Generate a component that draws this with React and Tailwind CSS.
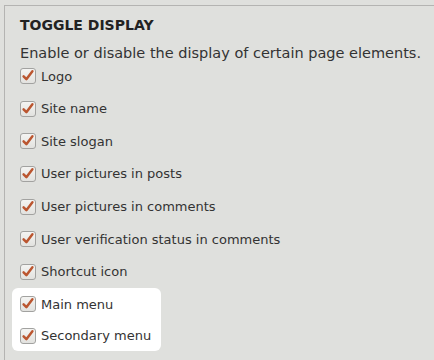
import React from "react";

const items = [
    "Logo",
    "Site name",
    "Site slogan",
    "User pictures in posts",
    "User pictures in comments",
    "User verification status in comments",
    "Shortcut icon",
];

const highlighted = ["Main menu", "Secondary menu"];

function CheckBox() {
    return (
        <span className="flex h-[16px] w-[16px] shrink-0 items-center justify-center rounded-[3px] border border-[#a2a2a0] bg-gradient-to-b from-[#f4f4f2] to-[#e2e2df]">
            <svg width="14" height="14" viewBox="0 0 13 13">
                <path
                    d="M2.4 6.8l2.6 2.7 5.6-7.4"
                    fill="none"
                    stroke="#bb5630"
                    strokeWidth="2.3"
                    strokeLinecap="round"
                    strokeLinejoin="round"
                />
            </svg>
        </span>
    );
}

function Row({ label, className = "h-[32.6px]" }) {
    return (
        <label className={`flex items-center gap-[5px] ${className}`}>
            <CheckBox />
            <span className="text-[13px] text-[#333]">{label}</span>
        </label>
    );
}

export default function App() {
    return (
        <div
            className="h-[360px] w-[434px] overflow-hidden bg-[#dfe0dd] pl-1 pt-[5px]"
            style={{ fontFamily: '"DejaVu Sans", sans-serif' }}
        >
            <fieldset className="h-full border-l border-t border-[#b4b4b2] pl-[15px] pt-[10px]">
                <h2 className="text-[14px] font-bold leading-[18px] text-[#222]">
                    TOGGLE DISPLAY
                </h2>
                <p className="mt-[10px] text-[14.5px] leading-[18px] text-[#333]">
                    Enable or disable the display of certain page elements.
                </p>
                <div className="-mt-[2px] flex flex-col">
                    {items.map((item) => (
                        <Row key={item} label={item} />
                    ))}
                    <div className="-ml-2 w-fit rounded-md bg-white pl-2 pr-[10px]">
                        <Row label={highlighted[0]} />
                        <Row label={highlighted[1]} className="h-[30px]" />
                    </div>
                </div>
            </fieldset>
        </div>
    );
}
